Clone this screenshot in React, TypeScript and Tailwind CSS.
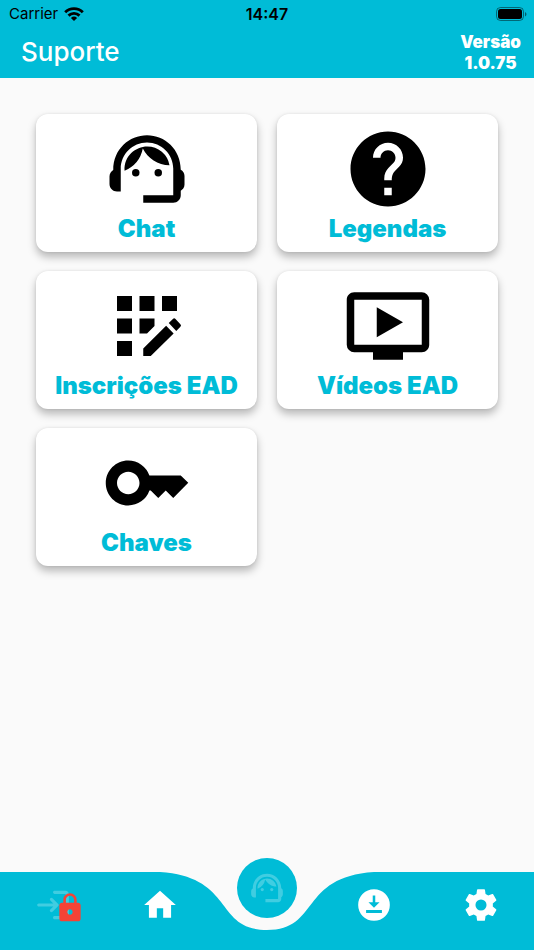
import type { ReactNode } from "react";
import { MdHelp, MdHome, MdKey, MdLock, MdOndemandVideo, MdSupportAgent } from "react-icons/md";

type IconProps = { className?: string };

function Glyph({ className, children }: IconProps & { children: ReactNode }) {
  return (
    <svg viewBox="0 0 24 24" className={className} fill="currentColor" aria-hidden="true">
      {children}
    </svg>
  );
}

function RegistrationIcon({ className }: IconProps) {
  return (
    <Glyph className={className}>
      <path d="M4 4h4v4H4zM10 4h4v4h-4zM16 4h4v4h-4zM4 10h4v4H4zM4 16h4v4H4zM10 10h4v2l-2 2h-2z" />
      <path d="M11 18l6.100-6.100 2 2.100L13 20h-2zM17.800 11.200l1.100-1.100q.35-.3.700 0l1.300 1.400q.35.35 0 .7l-1.100 1.100z" />
    </Glyph>
  );
}

function LoginIcon({ className }: IconProps) {
  return (
    <Glyph className={className}>
      <path d="M10.300 7.700a.984.984 0 0 0 0 1.400l1.900 1.900H3c-.55 0-1 .45-1 1s.45 1 1 1h9.200l-1.900 1.900a.984.984 0 0 0 0 1.400c.39.39 1.010.39 1.400 0l3.590-3.590a.996.996 0 0 0 0-1.410L11.700 7.700a.984.984 0 0 0-1.400 0zM20 19h-7c-.55 0-1 .45-1 1s.45 1 1 1h7c1.100 0 2-.9 2-2V5c0-1.100-.9-2-2-2h-7c-.55 0-1 .45-1 1s.45 1 1 1h7v14z" />
    </Glyph>
  );
}

function DownloadIcon({ className }: IconProps) {
  return (
    <Glyph className={className}>
      <path
        fillRule="evenodd"
        d="M12 2a10 10 0 1 0 0 20 10 10 0 0 0 0-20zM11.200 6h1.600v4.300h2.700L12 13.800l-3.500-3.500h2.700zM7 15.200h10V17H7z"
      />
    </Glyph>
  );
}

function SettingsIcon({ className }: IconProps) {
  return (
    <Glyph className={className}>
      <path d="M12 15.500A3.500 3.500 0 0 1 8.500 12 3.500 3.500 0 0 1 12 8.500a3.500 3.500 0 0 1 3.500 3.500 3.500 3.500 0 0 1-3.500 3.500m7.430-2.530c.04-.32.07-.64.07-.97s-.03-.66-.07-1l2.110-1.630c.19-.15.24-.42.12-.64l-2-3.460c-.12-.22-.39-.31-.61-.22l-2.490 1c-.52-.39-1.060-.73-1.690-.98l-.37-2.650A.506.506 0 0 0 14 2h-4c-.25 0-.46.18-.5.42l-.37 2.650c-.63.25-1.170.59-1.690.98l-2.490-1c-.22-.09-.49 0-.61.22l-2 3.460c-.13.22-.07.49.12.64L4.570 11c-.04.34-.07.67-.07 1s.03.65.07.97l-2.110 1.660c-.19.15-.25.42-.12.64l2 3.460c.12.22.39.3.61.22l2.490-1.010c.52.4 1.060.74 1.690.99l.37 2.650c.04.24.25.42.5.42h4c.25 0 .46-.18.5-.42l.37-2.650c.63-.26 1.170-.59 1.690-.99l2.490 1.010c.22.08.49 0 .61-.22l2-3.460c.12-.22.07-.49-.12-.64z" />
    </Glyph>
  );
}

function WifiIcon() {
  return (
    <svg viewBox="0 0 20 14" className="h-[14px] w-5" fill="none" stroke="currentColor" strokeWidth="2.9" aria-hidden="true">
      <path d="M1.200 5.200a12.600 12.600 0 0 1 17.600 0" />
      <path d="M4.500 8.600a7.900 7.900 0 0 1 11 0" />
      <path d="M10 14 6.900 10.900a4.500 4.500 0 0 1 6.200 0z" fill="currentColor" stroke="none" />
    </svg>
  );
}

function BatteryIcon() {
  return (
    <svg viewBox="0 0 32 15" className="h-[15px] w-8" aria-hidden="true">
      <rect x="0.500" y="0.500" width="27" height="13" rx="4" fill="none" stroke="#000" strokeOpacity="0.45" />
      <rect x="2" y="2" width="24" height="10" rx="2.500" fill="#000" />
      <path d="M29 5c2 .8 2 3.600 0 4.400z" fill="#000" fillOpacity="0.5" />
    </svg>
  );
}

const cards = [
  { label: "Chat", icon: MdSupportAgent },
  { label: "Legendas", icon: MdHelp },
  { label: "Inscrições EAD", icon: RegistrationIcon },
  { label: "Vídeos EAD", icon: MdOndemandVideo },
  { label: "Chaves", icon: MdKey },
];

function StatusBar() {
  return (
    <div className="grid h-7 grid-cols-3 items-center px-2 text-[15px] leading-5 text-black">
      <div className="flex items-center gap-[6px] pl-px">
        <span>Carrier</span>
        <WifiIcon />
      </div>
      <span className="text-center text-base leading-5 font-semibold">14:47</span>
      <div className="-mr-0.5 flex justify-end">
        <BatteryIcon />
      </div>
    </div>
  );
}

function Header() {
  return (
    <header className="bg-[#00bcd7] text-white">
      <StatusBar />
      <div className="flex h-[50px] items-center justify-between pr-[13px] pl-[21px]">
        <h1 className="pb-0.5 text-[26px] leading-8 font-medium">Suporte</h1>
        <p className="text-center text-[17px] leading-[21px] font-black">
          Versão
          <br />
          1.0.75
        </p>
      </div>
    </header>
  );
}

function Card({ label, icon: Icon }: (typeof cards)[number]) {
  return (
    <button
      type="button"
      className="flex aspect-[8/5] flex-col items-center justify-center rounded-xl bg-white shadow-[0_5px_8px_rgba(0,0,0,0.27),0_0_3px_rgba(0,0,0,0.08)]"
    >
      <Icon className="size-[90px] text-black" />
      <span className="pt-px text-2xl leading-7 font-black text-[#00bcd7]">{label}</span>
    </button>
  );
}

function BottomNav() {
  const item = "relative flex items-center justify-center";
  return (
    <nav className="sticky bottom-0 h-[78px] text-white">
      <svg
        viewBox="0 0 534 78"
        preserveAspectRatio="none"
        className="absolute inset-0 size-full"
        fill="#00bcd7"
        aria-hidden="true"
      >
        <path d="M0 0H160C235 5 214 58 267 58C320 58 299 5 374 0H534V78H0z" />
      </svg>
      <div className="grid h-[66px] grid-cols-5">
        <button type="button" aria-label="Entrar" className={item}>
          <span className="relative">
            <LoginIcon className="size-[38px] opacity-25" />
            <MdLock className="absolute top-[6px] left-5 size-8 text-[#f44336]" />
          </span>
        </button>
        <button type="button" aria-label="Início" className={item}>
          <MdHome className="size-[38px]" />
        </button>
        <button type="button" aria-label="Suporte" className={item}>
          <span className="absolute -top-[14px] flex size-[60px] items-center justify-center rounded-full bg-[#00bcd7]">
            <MdSupportAgent className="size-[38px] opacity-25" />
          </span>
        </button>
        <button type="button" aria-label="Downloads" className={item}>
          <DownloadIcon className="size-[38px]" />
        </button>
        <button type="button" aria-label="Configurações" className={item}>
          <SettingsIcon className="size-[38px]" />
        </button>
      </div>
    </nav>
  );
}

export default function App() {
  return (
    <div className="flex min-h-screen flex-col bg-[#fafafa] font-['Inter','Liberation_Sans',sans-serif]">
      <Header />
      <main className="grid flex-1 grid-cols-2 content-start gap-x-5 gap-y-[19px] p-9">
        {cards.map((card) => (
          <Card key={card.label} {...card} />
        ))}
      </main>
      <BottomNav />
    </div>
  );
}
